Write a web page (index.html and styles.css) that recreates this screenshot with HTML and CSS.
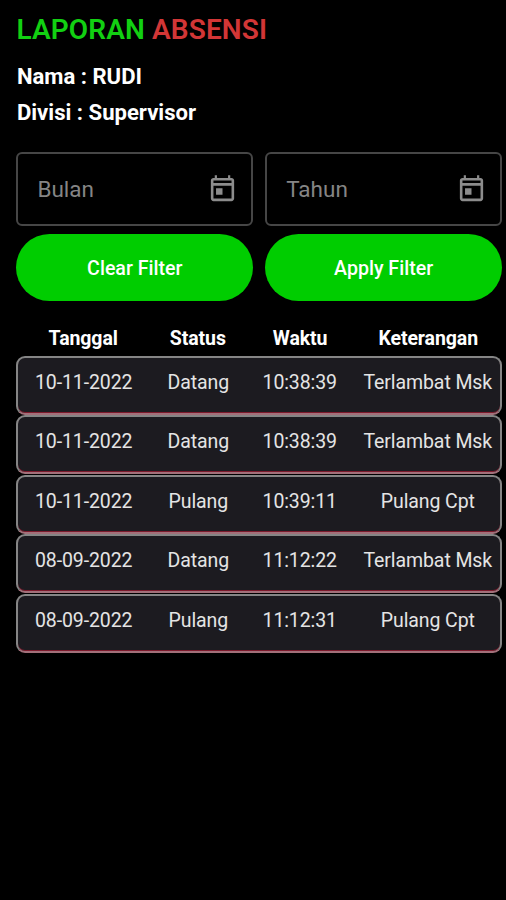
FILE: index.html
```html
<!DOCTYPE html>
<html lang="id">

<head>
    <meta charset="UTF-8">
    <meta name="viewport" content="width=device-width, initial-scale=1.0">
    <title>Laporan Absensi</title>
    <link rel="stylesheet" href="styles.css">
</head>

<body>

    <!-- Judul dan data karyawan -->
    <h1 class="title"><span class="title-green">LAPORAN</span> <span class="title-red">ABSENSI</span></h1>
    <p class="info info-nama">Nama : RUDI</p>
    <p class="info info-divisi">Divisi : Supervisor</p>

    <!-- Filter bulan dan tahun -->
    <div class="filter">
        <div class="field">
            <span class="field-label">Bulan</span>
            <svg class="field-icon" viewBox="0 0 24 24">
                <path d="M19 3h-1V1h-1.7v2H7.7V1H6v2H5c-1.1 0-2 .9-2 2v14c0 1.1.9 2 2 2h14c1.1 0 2-.9 2-2V5c0-1.1-.9-2-2-2zm0 16H5V9h14v10zm0-12H5V5h14v2zM7 11h5v5H7z" />
            </svg>
        </div>
        <div class="field">
            <span class="field-label">Tahun</span>
            <svg class="field-icon" viewBox="0 0 24 24">
                <path d="M19 3h-1V1h-1.7v2H7.7V1H6v2H5c-1.1 0-2 .9-2 2v14c0 1.1.9 2 2 2h14c1.1 0 2-.9 2-2V5c0-1.1-.9-2-2-2zm0 16H5V9h14v10zm0-12H5V5h14v2zM7 11h5v5H7z" />
            </svg>
        </div>
        <button class="btn">Clear Filter</button>
        <button class="btn">Apply Filter</button>
    </div>

    <!-- Tabel absensi -->
    <div class="row row-head">
        <span>Tanggal</span>
        <span>Status</span>
        <span>Waktu</span>
        <span>Keterangan</span>
    </div>
    <div class="list">
        <div class="row card">
            <span>10-11-2022</span>
            <span>Datang</span>
            <span>10:38:39</span>
            <span>Terlambat Msk</span>
        </div>
        <div class="row card">
            <span>10-11-2022</span>
            <span>Datang</span>
            <span>10:38:39</span>
            <span>Terlambat Msk</span>
        </div>
        <div class="row card">
            <span>10-11-2022</span>
            <span>Pulang</span>
            <span>10:39:11</span>
            <span>Pulang Cpt</span>
        </div>
        <div class="row card">
            <span>08-09-2022</span>
            <span>Datang</span>
            <span>11:12:22</span>
            <span>Terlambat Msk</span>
        </div>
        <div class="row card">
            <span>08-09-2022</span>
            <span>Pulang</span>
            <span>11:12:31</span>
            <span>Pulang Cpt</span>
        </div>
    </div>

</body>

</html>
```
FILE: styles.css
```css
* {
    box-sizing: border-box;
}

body {
    font-family: Roboto, sans-serif;
    background-color: #000;
    color: #fff;
    margin: 0;
    padding: 13px 4px 0 16.4px;
    height: 100vh;
    overflow: hidden;
}

/* Judul */

.title {
    margin: 0;
    font-size: 28px;
    line-height: 34px;
    font-weight: 600;
    letter-spacing: 0.12px;
}

.title-green {
    color: #12d012;
}

.title-red {
    color: #d23636;
}

.info {
    margin: 0;
    padding-left: 0.5px;
    font-size: 22.1px;
    line-height: 36px;
    font-weight: 700;
}

.info-nama {
    margin-top: 11px;
}

/* Filter */

.filter {
    display: grid;
    grid-template-columns: 1fr 1fr;
    column-gap: 12px;
    row-gap: 8px;
    margin-top: 22px;
}

.field {
    display: flex;
    align-items: center;
    justify-content: space-between;
    height: 74px;
    padding: 0 13px 0 19px;
    border: 2px solid #464646;
    border-radius: 6px;
}

.field-label {
    color: #858585;
    font-size: 22.5px;
}

.field-icon {
    width: 31px;
    height: 31px;
    fill: #8c8c8c;
}

.btn {
    height: 67px;
    padding: 2px 0 0;
    border: none;
    border-radius: 34px;
    background-color: #00cd00;
    color: #fff;
    font-family: inherit;
    font-size: 19.6px;
    font-weight: 500;
    cursor: pointer;
}

/* Tabel */

.row {
    display: grid;
    grid-template-columns: 134fr 96fr 109fr 148fr;
    text-align: center;
    white-space: nowrap;
    font-size: 19.5px;
    letter-spacing: -0.1px;
}

.row-head {
    margin-top: 26px;
    line-height: 24px;
    font-weight: 700;
}

.list {
    display: flex;
    flex-direction: column;
    gap: 0.5px;
    margin-top: 4.5px;
}

.card {
    height: 59px;
    padding-top: 13px;
    line-height: 24px;
    color: #e4e4e4;
    background-color: #1c1b20;
    border: 2px solid #858585;
    border-bottom-color: #a2707a;
    border-radius: 9px;
    box-shadow: inset 0 -1px 0 #7c1a2c;
}

.card span:first-child {
    margin: 0 1px 0 -1px;
}

.card span:last-child {
    margin: 0 -1px 0 1px;
}
```
